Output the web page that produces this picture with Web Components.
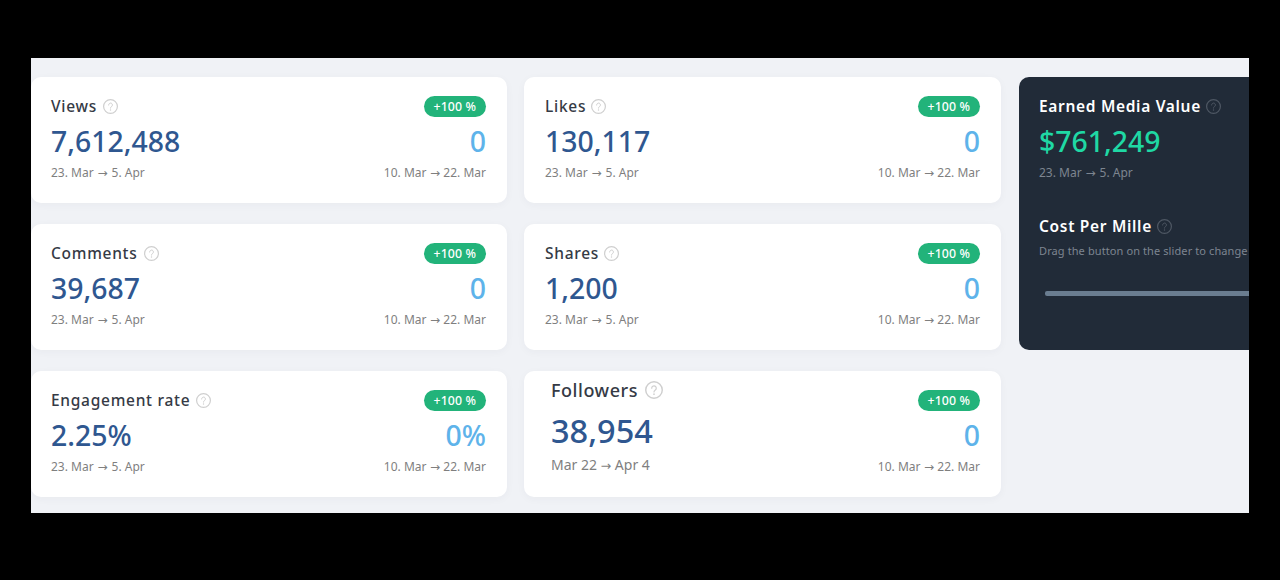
<!DOCTYPE html>
<html>
<head>
<meta charset="utf-8">
<title>Stats</title>
<style>
html,body{margin:0;height:100%;background:#000;}
body{box-sizing:border-box;padding:58px 31px 67px;overflow:hidden;font-family:"Noto Sans","Open Sans",sans-serif;}
stat-card:nth-of-type(even){--pad:21px;--gap:5px;}
</style>
</head>
<body>
<stats-board>
  <stat-card name="Views" value="7,612,488" prev="0"></stat-card>
  <stat-card name="Likes" value="130,117" prev="0"></stat-card>
  <dark-card></dark-card>
  <stat-card name="Comments" value="39,687" prev="0"></stat-card>
  <stat-card name="Shares" value="1,200" prev="0"></stat-card>
  <stat-card name="Engagement rate" value="2.25%" prev="0%"></stat-card>
  <stat-card big name="Followers" value="38,954" prev="0" range="Mar 22 → Apr 4"></stat-card>
</stats-board>
<script>
const helpIcon = (color) => `<svg width="15" height="15" viewBox="0 0 15 15" fill="none" aria-hidden="true">
  <circle cx="7.5" cy="7.5" r="6.9" stroke="${color}" stroke-width="1.2"/>
  <path d="M5.6 6a1.9 1.9 0 1 1 3 1.5c-.7.5-1.1.8-1.1 1.6" stroke="${color}" stroke-width="1" stroke-linecap="round"/>
  <circle cx="7.5" cy="11" r=".7" fill="${color}"/>
</svg>`;
const arrow = '<span class="arrow">→</span>';

class StatsBoard extends HTMLElement {
  constructor() {
    super();
    this.attachShadow({mode:'open'});
    this.shadowRoot.innerHTML = `
    <style>
      :host{display:block;width:1218px;height:455px;overflow:hidden;background:#f0f2f6;}
      .grid{display:grid;grid-template-columns:476px 477px 476px;column-gap:17px;grid-auto-rows:126px;row-gap:21px;padding-top:19px;width:1460px;}
    </style>
    <div class="grid"><slot></slot></div>`;
  }
}
customElements.define('stats-board', StatsBoard);

class StatCard extends HTMLElement {
  constructor() {
    super();
    this.attachShadow({mode:'open'});
  }
  connectedCallback() {
    const name = this.getAttribute('name');
    const value = this.getAttribute('value');
    const prev = this.getAttribute('prev');
    const range = (this.getAttribute('range') || '23. Mar → 5. Apr').replace('→', arrow);
    this.shadowRoot.innerHTML = `
    <style>
      :host{display:flex;justify-content:space-between;box-sizing:border-box;padding:19px 21px 0 var(--pad,20px);background:#fff;border-radius:10px;box-shadow:0 2px 8px rgba(40,50,80,.04);}
      :host([big]){padding-top:6px;padding-left:27px;}
      .col{display:flex;flex-direction:column;}
      .right{align-items:flex-end;}
      .title{display:flex;align-items:center;gap:var(--gap,6px);height:20px;font-size:15.5px;font-weight:500;letter-spacing:.72px;color:#353a45;line-height:20px;}
      :host([big]) .title{font-size:18px;height:26px;gap:7px;letter-spacing:.55px;}
      :host([big]) svg{width:18px;height:18px;}
      .value{font-size:28.4px;font-weight:500;line-height:40px;margin-top:5px;color:#2f5790;}
      :host([big]) .value{font-size:32.5px;margin-top:7px;height:42px;line-height:42px;}
      .range{height:16px;font-size:12px;line-height:16px;margin-top:4px;color:#7f7f7f;}
      :host([big]) .range{height:20px;font-size:14px;line-height:20px;margin-top:3px;}
      .arrow{font-family:"DejaVu Sans",sans-serif;font-size:1em;line-height:1;margin:0 .8px;}
      :host([big]) .range .arrow{font-size:.9em;margin:0;}
      .prange .arrow{margin:0 .3px;}
      .badge{height:21px;padding:0 10px;border-radius:11px;background:#22b37a;color:#fff;font-size:12.3px;font-weight:500;line-height:21px;letter-spacing:.1px;}
      .prev{font-size:28.4px;font-weight:500;line-height:40px;margin-top:4px;color:#5eb3ea;}
      .prange{height:16px;font-size:12px;line-height:16px;margin-top:4px;color:#7f7f7f;}
      :host([big]) .badge{margin-top:13px;}
    </style>
    <div class="col">
      <div class="title"><span>${name}</span>${helpIcon('#cfcfcf')}</div>
      <div class="value">${value}</div>
      <div class="range">${range}</div>
    </div>
    <div class="col right">
      <div class="badge">+100 %</div>
      <div class="prev">${prev}</div>
      <div class="prange">10. Mar ${arrow} 22. Mar</div>
    </div>`;
  }
}
customElements.define('stat-card', StatCard);

class DarkCard extends HTMLElement {
  constructor() {
    super();
    this.attachShadow({mode:'open'});
    this.shadowRoot.innerHTML = `
    <style>
      :host{display:block;grid-row:span 2;box-sizing:border-box;margin-left:1px;padding:19px 20px 0;background:#212b38;border-radius:10px;}
      .title{display:flex;align-items:center;gap:5px;height:20px;font-size:15.5px;font-weight:600;letter-spacing:.68px;color:#fff;line-height:20px;}
      .value{font-size:28.4px;font-weight:500;line-height:40px;margin-top:5px;color:#1fd8a4;}
      .range{height:16px;font-size:12px;line-height:16px;margin-top:4px;color:#7d8590;}
      .arrow{font-family:"DejaVu Sans",sans-serif;font-size:1em;line-height:1;margin:0 .8px;}
      .second{margin-top:35px;}
      .hint{font-size:11px;line-height:16px;margin-top:7px;color:#7d8590;white-space:nowrap;letter-spacing:.1px;}
      .track{height:5px;margin:32px 0 0 6px;background:#6a7d90;border-radius:2px;width:440px;}
    </style>
    <div class="title"><span>Earned Media Value</span>${helpIcon('#4f5864')}</div>
    <div class="value">$761,249</div>
    <div class="range">23. Mar ${arrow} 5. Apr</div>
    <div class="title second"><span>Cost Per Mille</span>${helpIcon('#4f5864')}</div>
    <div class="hint">Drag the button on the slider to change</div>
    <div class="track"></div>`;
  }
}
customElements.define('dark-card', DarkCard);
</script>
</body>
</html>
